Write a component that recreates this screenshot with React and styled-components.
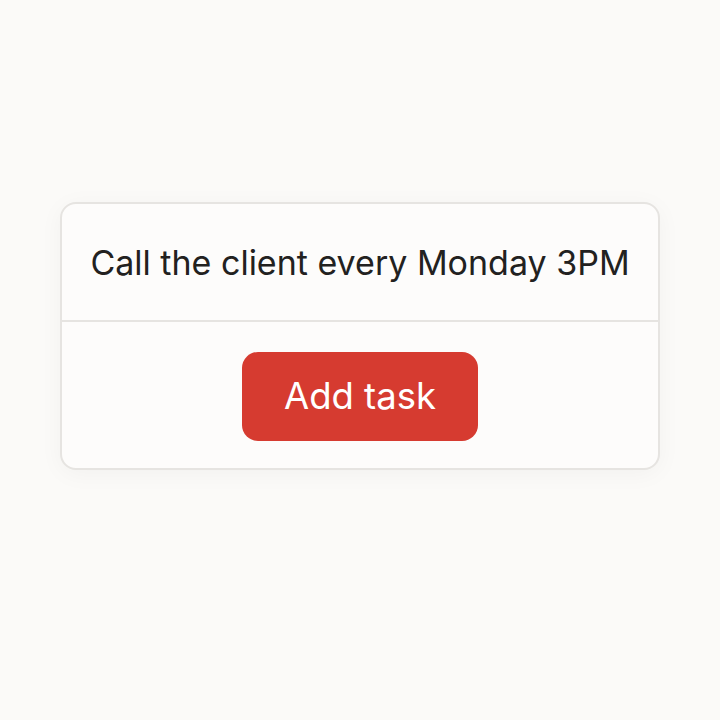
import React from 'react'
import styled, { createGlobalStyle } from 'styled-components'

const GlobalStyle = createGlobalStyle`
  html, body {
    margin: 0;
    padding: 0;
    background: #fbfaf8;
  }
  body {
    font-family: Inter, "Noto Sans", sans-serif;
  }
`

const App = () => {
  return (
    <>
      <GlobalStyle />
      <Page>
        <Card>
          <TaskText>Call the client every Monday 3PM</TaskText>
          <Footer>
            <AddButton type="button">Add task</AddButton>
          </Footer>
        </Card>
      </Page>
    </>
  )
}

export default App

const Page = styled.div`
  width: 720px;
  height: 720px;
  display: flex;
  justify-content: center;
  padding-top: 202px;
  box-sizing: border-box;
`

const Card = styled.div`
  width: 600px;
  height: 268px;
  box-sizing: border-box;
  border: 2px solid #e6e4e1;
  border-radius: 16px;
  background: #fdfcfb;
  box-shadow: 0 4px 24px rgba(0, 0, 0, 0.04);
  display: flex;
  flex-direction: column;
`

const TaskText = styled.div`
  height: 118px;
  display: flex;
  align-items: center;
  justify-content: center;
  border-bottom: 2px solid #e6e4e1;
  font-size: 34px;
  color: #222120;
  box-sizing: border-box;
`

const Footer = styled.div`
  flex: 1;
  display: flex;
  justify-content: center;
  align-items: center;
`

const AddButton = styled.button`
  width: 236px;
  height: 89px;
  border: none;
  border-radius: 16px;
  background: #d63b30;
  color: #ffffff;
  font-family: Inter, "Noto Sans", sans-serif;
  font-size: 36.5px;
  font-weight: 400;
  cursor: pointer;
  margin-top: 2px;
`
